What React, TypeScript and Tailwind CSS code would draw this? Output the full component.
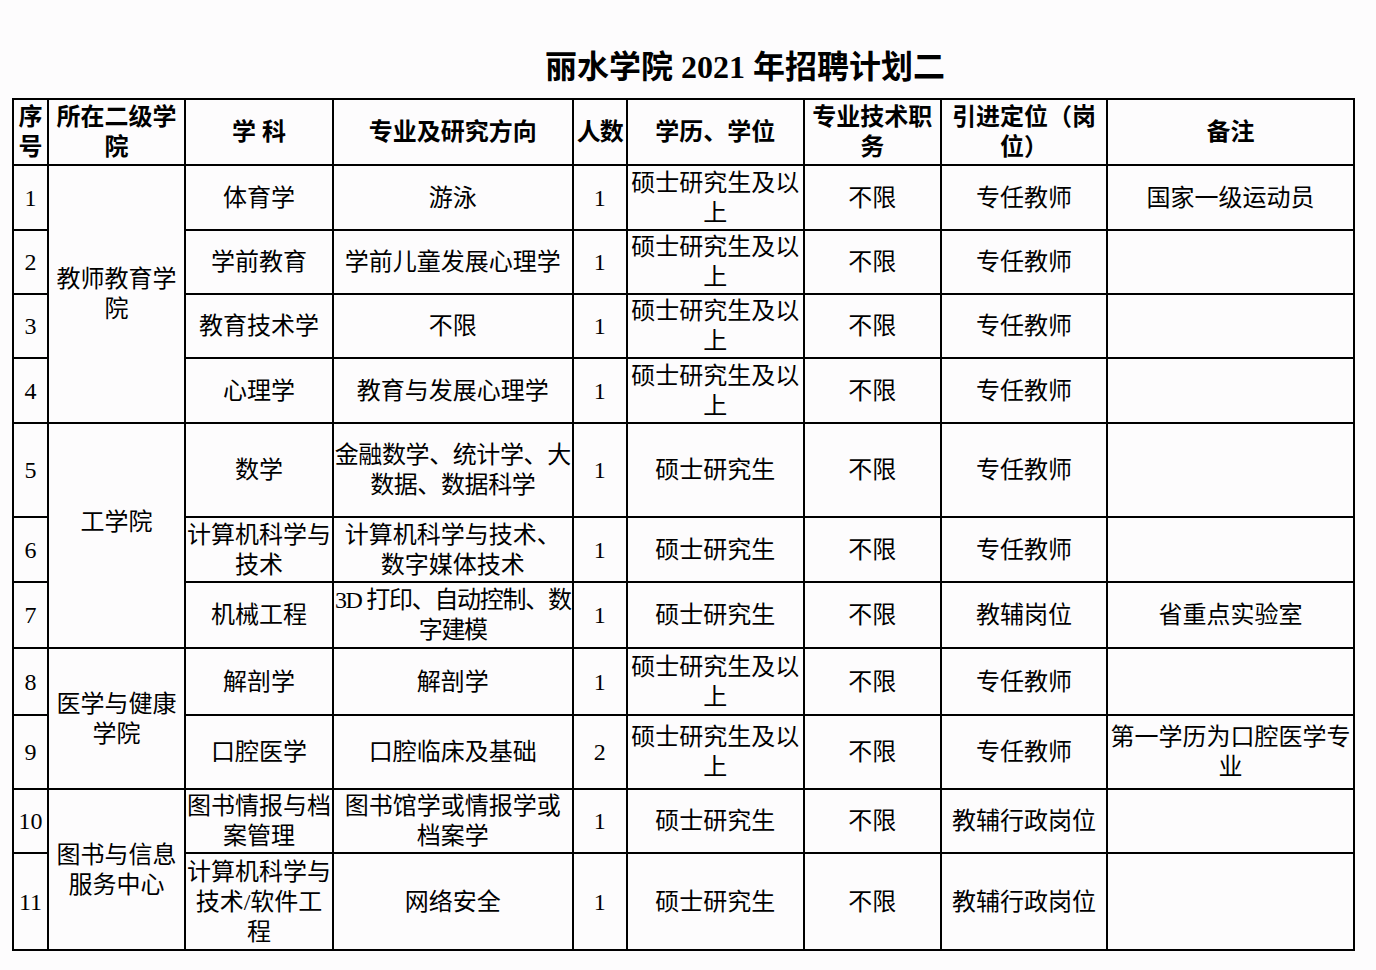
const FONT = "[font-family:'Liberation_Serif','Noto_Sans_CJK_SC',serif]";

interface Row {
  id: string;
  subject: string[];
  major: string[];
  count: string;
  degree: string[];
  title: string;
  post: string;
  note: string[];
  h: string;
  majorClass?: string;
}

const MASTER_PLUS = ["硕士研究生及以", "上"];
const MASTER = ["硕士研究生"];

const rows: Row[] = [
  { id: "1", subject: ["体育学"], major: ["游泳"], count: "1", degree: MASTER_PLUS, title: "不限", post: "专任教师", note: ["国家一级运动员"], h: "h-[65px]" },
  { id: "2", subject: ["学前教育"], major: ["学前儿童发展心理学"], count: "1", degree: MASTER_PLUS, title: "不限", post: "专任教师", note: [], h: "h-[64px]" },
  { id: "3", subject: ["教育技术学"], major: ["不限"], count: "1", degree: MASTER_PLUS, title: "不限", post: "专任教师", note: [], h: "h-[64px]" },
  { id: "4", subject: ["心理学"], major: ["教育与发展心理学"], count: "1", degree: MASTER_PLUS, title: "不限", post: "专任教师", note: [], h: "h-[65px]" },
  { id: "5", subject: ["数学"], major: ["金融数学、统计学、大", "数据、数据科学"], count: "1", degree: MASTER, title: "不限", post: "专任教师", note: [], h: "h-[94px]", majorClass: "tracking-[-0.4px]" },
  { id: "6", subject: ["计算机科学与", "技术"], major: ["计算机科学与技术、", "数字媒体技术"], count: "1", degree: MASTER, title: "不限", post: "专任教师", note: [], h: "h-[65px]" },
  { id: "7", subject: ["机械工程"], major: ["3D 打印、自动控制、数", "字建模"], count: "1", degree: MASTER, title: "不限", post: "教辅岗位", note: ["省重点实验室"], h: "h-[66px]", majorClass: "tracking-[-1.3px]" },
  { id: "8", subject: ["解剖学"], major: ["解剖学"], count: "1", degree: MASTER_PLUS, title: "不限", post: "专任教师", note: [], h: "h-[67px]" },
  { id: "9", subject: ["口腔医学"], major: ["口腔临床及基础"], count: "2", degree: MASTER_PLUS, title: "不限", post: "专任教师", note: ["第一学历为口腔医学专", "业"], h: "h-[74px]" },
  { id: "10", subject: ["图书情报与档", "案管理"], major: ["图书馆学或情报学或", "档案学"], count: "1", degree: MASTER, title: "不限", post: "教辅行政岗位", note: [], h: "h-[64px]" },
  { id: "11", subject: ["计算机科学与", "技术/软件工", "程"], major: ["网络安全"], count: "1", degree: MASTER, title: "不限", post: "教辅行政岗位", note: [], h: "h-[97px]" },
];

// college column: merged cells keyed by first row index
const colleges: { [key: number]: { lines: string[]; span: number; cls?: string } } = {
  0: { lines: ["教师教育学", "院"], span: 4 },
  4: { lines: ["工学院"], span: 3, cls: "pb-[28px]" },
  7: { lines: ["医学与健康", "学院"], span: 2 },
  9: { lines: ["图书与信息", "服务中心"], span: 2 },
};

const Lines = ({ lines, className = "" }: { lines: string[]; className?: string }) => (
  <>
    {lines.map((l, i) => (
      <div key={i} className={`whitespace-nowrap ${className}`}>
        {l}
      </div>
    ))}
  </>
);

const cell = "border-2 border-black p-0 text-center align-middle";

const App = () => {
  return (
    <div className={`w-[1376px] h-[970px] bg-[#fdfcfd] text-black ${FONT}`}>
      <div className="h-[98px] pt-[51px] pl-[545px]">
        <h1 className="text-[32px] leading-[32px] font-bold whitespace-nowrap">丽水学院 2021 年招聘计划二</h1>
      </div>

      <table className="ml-[12px] w-[1342px] table-fixed border-collapse text-[24px] leading-[30px]">
        <colgroup>
          <col className="w-[35px]" />
          <col className="w-[137px]" />
          <col className="w-[148px]" />
          <col className="w-[239.5px]" />
          <col className="w-[54.5px]" />
          <col className="w-[176.5px]" />
          <col className="w-[137.5px]" />
          <col className="w-[166px]" />
          <col className="w-[247px]" />
        </colgroup>
        <thead>
          <tr className="h-[66px] font-bold">
            <th className={cell}><Lines lines={["序", "号"]} /></th>
            <th className={cell}><Lines lines={["所在二级学", "院"]} /></th>
            <th className={cell}>学 科</th>
            <th className={cell}>专业及研究方向</th>
            <th className={cell}><div className="whitespace-nowrap tracking-[-1px]">人数</div></th>
            <th className={cell}>学历、学位</th>
            <th className={cell}><Lines lines={["专业技术职", "务"]} /></th>
            <th className={cell}><Lines lines={["引进定位（岗", "位）"]} /></th>
            <th className={cell}>备注</th>
          </tr>
        </thead>
        <tbody>
          {rows.map((r, i) => (
            <tr key={r.id} className={r.h}>
              <td className={cell}>{r.id}</td>
              {colleges[i] && (
                <td rowSpan={colleges[i].span} className={cell}>
                  <div className={colleges[i].cls}>
                    <Lines lines={colleges[i].lines} />
                  </div>
                </td>
              )}
              <td className={cell}><Lines lines={r.subject} /></td>
              <td className={cell}><Lines lines={r.major} className={r.majorClass} /></td>
              <td className={cell}>{r.count}</td>
              <td className={cell}><Lines lines={r.degree} /></td>
              <td className={cell}>{r.title}</td>
              <td className={cell}>{r.post}</td>
              <td className={cell}><Lines lines={r.note} /></td>
            </tr>
          ))}
        </tbody>
      </table>
    </div>
  );
};

export default App;
